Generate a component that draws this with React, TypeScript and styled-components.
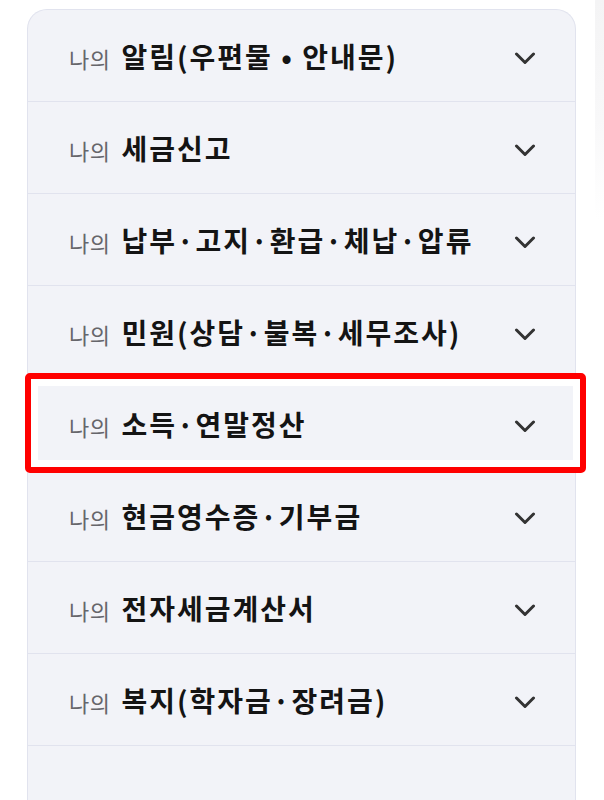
import React from 'react';
import styled, { createGlobalStyle } from 'styled-components';

const GlobalStyle = createGlobalStyle`
  html, body {
    margin: 0;
    padding: 0;
    background: #ffffff;
  }
  body {
    font-family: "Noto Sans CJK KR", "Noto Sans", sans-serif;
  }
`;

const Page = styled.div`
  display: flex;
  flex-direction: row;
  align-items: stretch;
  min-height: 800px;
  overflow: hidden;
`;

const Card = styled.div`
  box-sizing: border-box;
  width: 549px;
  margin: 9px 0 0 27px;
  display: flex;
  flex-direction: column;
  background: #f2f3f8;
  border: 1px solid #e1e3ee;
  border-bottom: none;
  border-radius: 20px 20px 0 0;
`;

const Row = styled.div<{ $highlighted?: boolean }>`
  position: relative;
  box-sizing: border-box;
  height: 92px;
  display: flex;
  flex-direction: row;
  align-items: center;
  justify-content: space-between;
  padding: 0 39px 0 41px;
  border-bottom: 1px solid #e1e3ee;
  cursor: pointer;

  ${(props) =>
    props.$highlighted &&
    `
    &::after {
      content: '';
      position: absolute;
      left: -3px;
      right: -11px;
      top: -5px;
      bottom: -4px;
      border: 6px solid #ff0000;
      border-radius: 5px;
      box-shadow: inset 0 0 0 7px #ffffff;
      pointer-events: none;
    }
  `}
`;

const Filler = styled.div`
  flex: 1;
  min-height: 60px;
`;

const Label = styled.div`
  display: flex;
  flex-direction: row;
  align-items: baseline;
  white-space: nowrap;
`;

const Prefix = styled.span`
  font-size: 22px;
  color: #66666b;
  letter-spacing: 0.5px;
  margin-right: 11px;
`;

const Title = styled.span`
  font-size: 28px;
  font-weight: 700;
  color: #141414;
  letter-spacing: 2px;
`;

const Chevron = styled.svg`
  width: 22px;
  height: 13px;
  flex-shrink: 0;
  margin-top: 5px;
`;

const EdgeStrip = styled.div`
  margin-left: auto;
  width: 9px;
  background: linear-gradient(to bottom, #f4f4f5 0%, #f8f8f9 120px, #ffffff 220px);
`;

const menus = [
  '알림(우편물 • 안내문)',
  '세금신고',
  '납부·고지·환급·체납·압류',
  '민원(상담·불복·세무조사)',
  '소득·연말정산',
  '현금영수증·기부금',
  '전자세금계산서',
  '복지(학자금·장려금)',
];

const ChevronDown: React.FC = () => (
  <Chevron viewBox="0 0 22 13" fill="none">
    <polyline
      points="2.5,2 11,10.5 19.5,2"
      stroke="#333333"
      strokeWidth="3"
      strokeLinecap="round"
      strokeLinejoin="round"
    />
  </Chevron>
);

const App: React.FC = () => {
  return (
    <>
      <GlobalStyle />
      <Page>
        <Card>
          {menus.map((title) => (
            <Row key={title} $highlighted={title === '소득·연말정산'}>
              <Label>
                <Prefix>나의</Prefix>
                <Title>{title}</Title>
              </Label>
              <ChevronDown />
            </Row>
          ))}
          <Filler />
        </Card>
        <EdgeStrip />
      </Page>
    </>
  );
};

export default App;
